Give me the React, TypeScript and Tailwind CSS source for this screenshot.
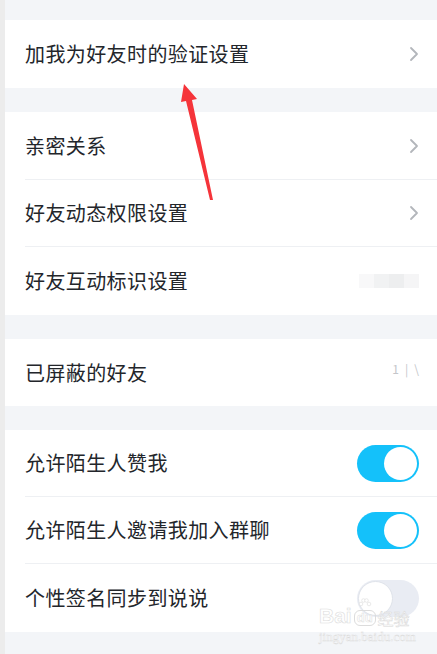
import React from "react";

const Chevron = () => (
  <svg width="10" height="16" viewBox="0 0 10 16" className="shrink-0">
    <polyline points="2,2 8,8 2,14" fill="none" stroke="#b3b6bb" strokeWidth="1.8" strokeLinecap="round" strokeLinejoin="round" />
  </svg>
);

const Toggle = ({ on }: { on: boolean }) =>
  on ? (
    <div className="w-[62px] h-[37px] rounded-full bg-[#14c1fa] flex items-center justify-end pr-[2px]">
      <div className="w-[33px] h-[33px] rounded-full bg-white" />
    </div>
  ) : (
    <div className="w-[62px] h-[37px] rounded-full bg-[#e9ecf3] flex items-center justify-start pl-[1px]">
      <div className="w-[35px] h-[35px] rounded-full bg-white border border-[#dfe3ea]" />
    </div>
  );

const Row = ({
  label,
  right,
  divider,
  h,
}: {
  label: string;
  right?: React.ReactNode;
  divider?: boolean;
  h: string;
}) => (
  <div className="bg-white pl-[20px] relative flex flex-col">
    <div className={`${h} flex items-center justify-between pr-[18px]`}>
      <span className="text-[20px] text-[#23262b] leading-none tracking-[0.4px]">{label}</span>
      {right}
    </div>
    {divider && <div className="h-px bg-[#eef0f3]" />}
  </div>
);

export default function App() {
  return (
    <div
      className="w-[437px] h-[654px] overflow-hidden flex relative bg-[#f3f5f8]"
      style={{ fontFamily: '"Noto Sans CJK SC", "Noto Sans", sans-serif' }}
    >
      <div className="w-[5px] shrink-0 bg-[#ececec]" />
      <div className="flex-1 flex flex-col">
        <div className="h-[20px] shrink-0" />
        <Row h="h-[68px]" label="加我为好友时的验证设置" right={<Chevron />} />
        <div className="h-[24px] shrink-0" />
        <Row h="h-[67px]" label="亲密关系" right={<Chevron />} divider />
        <Row h="h-[66px]" label="好友动态权限设置" right={<Chevron />} divider />
        <Row
          h="h-[68px]"
          label="好友互动标识设置"
          right={
            <div className="flex items-center gap-0 opacity-80">
              <div className="w-[15px] h-[14px] bg-[#f7f7f8]" />
              <div className="w-[15px] h-[14px] bg-[#eeeff1]" />
              <div className="w-[15px] h-[14px] bg-[#e9eaec]" />
              <div className="w-[15px] h-[14px] bg-[#f3f3f4]" />
            </div>
          }
        />
        <div className="h-[24px] shrink-0" />
        <Row
          h="h-[67px]"
          label="已屏蔽的好友"
          right={
            <div className="flex items-center gap-[6px] text-[#c4c6ca] text-[12px] leading-none mb-[8px]">
              <span>1</span>
              <span>|</span>
              <span>\</span>
            </div>
          }
        />
        <div className="h-[24px] shrink-0" />
        <Row h="h-[66px]" label="允许陌生人赞我" right={<Toggle on />} divider />
        <Row h="h-[66px]" label="允许陌生人邀请我加入群聊" right={<Toggle on />} divider />
        <Row h="h-[68px]" label="个性签名同步到说说" right={<Toggle on={false} />} />
      </div>

      {/* watermark */}
      <div className="absolute left-[319px] top-[598px] flex flex-col items-start pointer-events-none">
        <div className="flex items-end leading-none">
          <span
            className="text-[21px] font-bold text-white"
            style={{ fontFamily: '"Liberation Sans", sans-serif', WebkitTextStroke: "0.6px #dcdcdc" }}
          >
            Bai
          </span>
          <div className="flex flex-col items-center mx-[2px]">
            <svg width="14" height="12" viewBox="0 0 14 12">
              <circle cx="3" cy="6" r="1.8" fill="white" stroke="#dcdcdc" strokeWidth="0.6" />
              <circle cx="5.5" cy="2.5" r="1.8" fill="white" stroke="#dcdcdc" strokeWidth="0.6" />
              <circle cx="8.5" cy="2.5" r="1.8" fill="white" stroke="#dcdcdc" strokeWidth="0.6" />
              <circle cx="11" cy="6" r="1.8" fill="white" stroke="#dcdcdc" strokeWidth="0.6" />
            </svg>
            <span
              className="rounded-[6px] px-[2px] border border-[#dcdcdc] text-[13px] font-bold text-white leading-[14px]"
              style={{ fontFamily: '"Liberation Sans", sans-serif', WebkitTextStroke: "0.5px #dcdcdc" }}
            >
              du
            </span>
          </div>
          <span
            className="text-[16px] text-white"
            style={{ fontFamily: '"Noto Sans CJK SC", sans-serif', WebkitTextStroke: "0.5px #d8d8d8" }}
          >
            经验
          </span>
        </div>
        <div
          className="text-[13px] leading-none mt-[4px] text-white"
          style={{ fontFamily: '"Liberation Serif", serif', WebkitTextStroke: "0.4px #dadada" }}
        >
          jingyan.baidu.com
        </div>
      </div>

      {/* red arrow */}
      <svg className="absolute left-0 top-0 pointer-events-none" width="437" height="654">
        <polygon points="184,84 197,99 192,100 213,200 210,200 186,101 181,102" fill="#f5343a" />
      </svg>
    </div>
  );
}
